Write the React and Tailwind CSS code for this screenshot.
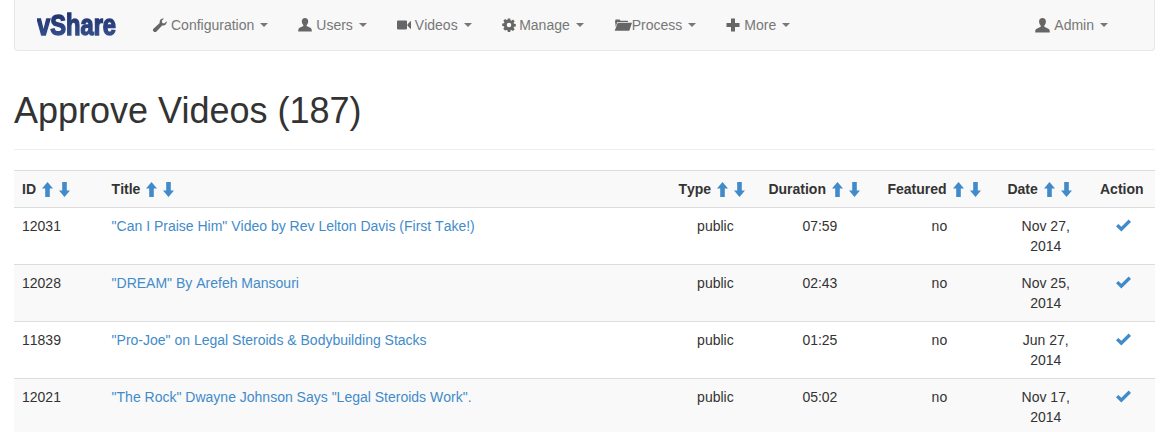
const Caret = () => <span className="ml-[6px] inline-block w-0 h-0 align-middle border-t-[4px] border-x-[4px] border-x-transparent border-t-[#777]" />

const Wrench = ({ className }) => (
  <svg viewBox="0 0 14 14" className={className} fill="currentColor">
    <path d="M13.6 3.2c.3 1.2 0 2.500-.9 3.400-1 .9-2.300 1.200-3.500.8L3 14c-.5.4-1.300.4-1.800-.1l-1-1c-.5-.5-.5-1.300 0-1.800l6.500-6.100C6.400 3.800 6.700 2.500 7.600 1.500 8.500.6 9.800.3 11 .6L8.800 2.800l.4 2.100 2.100.5z" />
  </svg>
)
const User = ({ className }) => (
  <svg viewBox="0 0 14 14" className={className} fill="currentColor">
    <path d="M7 0c2 0 3.200 1.400 3.200 3.300 0 1.300-.5 2.700-1.300 3.500-.4.500-.4 1.200.1 1.500 1.200.7 4 1.300 4.500 2.700.2.700.3 1.700.3 2.500H.2c0-.8.1-1.800.3-2.500.5-1.400 3.300-2 4.500-2.700.5-.3.500-1 .1-1.500C4.300 6 3.800 4.600 3.800 3.300 3.800 1.400 5 0 7 0z" />
  </svg>
)
const Video = ({ className }) => (
  <svg viewBox="0 0 14 14" className={className} fill="currentColor">
    <path d="M0 3.500C0 3 .4 2.600 1 2.600h8c.5 0 1 .4 1 .9v7c0 .5-.5.9-1 .9H1c-.6 0-1-.4-1-.9zM10.500 6.200 13.400 3.300H14v7.400h-.6l-2.900-2.900z" />
  </svg>
)
const Cog = ({ className }) => (
  <svg viewBox="0 0 14 14" className={className} fill="currentColor" fillRule="evenodd">
    <path d="M5.800.5h2.400l.3 1.800 1 .4L11 1.600l1.700 1.700-1.100 1.500.4 1 1.800.3v2.400l-1.800.3-.4 1 1.100 1.500-1.700 1.700-1.500-1.100-1 .4-.3 1.800H5.800l-.3-1.800-1-.4L3 12.400 1.300 10.700l1.100-1.500-.4-1-1.800-.3V5.500L2 5.200l.4-1L1.300 2.700 3 1l1.500 1.100 1-.4zM7 4.700a2.300 2.300 0 1 0 0 4.600 2.300 2.300 0 0 0 0-4.600z" />
  </svg>
)
const Folder = ({ className }) => (
  <svg viewBox="0 0 18 14" className={className} fill="currentColor">
    <path d="M1 3.500 1.600 1.500h4l.8 1.200h7.400l.4 1.200H3.300L1.800 9zM3.800 4.800H18l-2.700 8H.7z" />
  </svg>
)
const Plus = ({ className }) => (
  <svg viewBox="0 0 14 14" className={className} fill="currentColor">
    <path d="M5 .5h4v4.500h4.500v4H9v4.500H5V9H.5V5H5z" />
  </svg>
)
const ArrowUp = () => (
  <svg viewBox="0 0 11 15" className="w-[11px] h-[15px] text-[#428bca]" fill="currentColor">
    <path d="M5.500 0 11 6.500H7.800V15H3.200V6.500H0z" />
  </svg>
)
const ArrowDown = () => (
  <svg viewBox="0 0 11 15" className="w-[11px] h-[15px] text-[#428bca]" fill="currentColor">
    <path d="M5.500 15 11 8.500H7.800V0H3.200V8.500H0z" />
  </svg>
)
const Check = () => (
  <svg viewBox="0 0 14 12" className="inline-block w-[15px] h-[13px] mr-[1px] text-[#428bca] align-[-1px]" fill="currentColor">
    <path d="M0 6.700 2.200 4.500 5 7.200 11.800.5 14 2.700 5 11.500z" />
  </svg>
)

const menus = [
  { label: "Configuration", Icon: Wrench, icon: "w-[14px] h-[14px] mr-[4px]" },
  { label: "Users", Icon: User, icon: "w-[14px] h-[14px] mr-[4px]" },
  { label: "Videos", Icon: Video, icon: "w-[14px] h-[14px] mr-[4px]" },
  { label: "Manage", Icon: Cog, icon: "w-[14px] h-[14px] mr-[3.5px]" },
  { label: "Process", Icon: Folder, icon: "w-[18px] h-[14px]" },
  { label: "More", Icon: Plus, icon: "w-[14px] h-[14px] mr-[4px]" },
]

const videos = [
  { id: "12031", title: '"Can I Praise Him" Video by Rev Lelton Davis (First Take!)', duration: "07:59", date: "Nov 27, 2014" },
  { id: "12028", title: '"DREAM" By Arefeh Mansouri', duration: "02:43", date: "Nov 25, 2014" },
  { id: "11839", title: '"Pro-Joe" on Legal Steroids & Bodybuilding Stacks', duration: "01:25", date: "Jun 27, 2014" },
  { id: "12021", title: '"The Rock" Dwayne Johnson Says "Legal Steroids Work".', duration: "05:02", date: "Nov 17, 2014" },
]

const headers = [
  { label: "ID", sort: true, width: "w-[89.6px]" },
  { label: "Title", sort: true, width: "" },
  { label: "Type", sort: true, width: "w-[90px]" },
  { label: "Duration", sort: true, width: "w-[119px]" },
  { label: "Featured", sort: true, width: "w-[120px]" },
  { label: "Date", sort: true, width: "w-[92.6px]" },
  { label: "Action", sort: false, width: "w-[63px]" },
]

export default function App() {
  return (
    <div className="h-[432px] overflow-hidden bg-white text-[14px] leading-[20px] text-[#333] [font-kerning:none]" style={{ fontFamily: '"Liberation Sans", Arial, sans-serif' }}>
      <div className="px-[14px]">
        <nav className="flex items-center h-[51px] bg-[#f8f8f8] border border-t-0 border-[#e7e7e7] rounded-b-[4px]">
          <span className="ml-[22px] w-[101px] text-[30px] leading-[34px] font-bold origin-left scale-x-[0.79] bg-gradient-to-b from-[#1b2c68] to-[#3a5694] bg-clip-text text-transparent [-webkit-text-stroke:1.5px_transparent] whitespace-nowrap">vShare</span>
          {menus.map(({ label, Icon, icon }) => (
            <a key={label} className="flex items-center px-[15px] h-full text-[#777] whitespace-nowrap">
              <Icon className={icon + " text-[#666]"} />
              {label}
              <Caret />
            </a>
          ))}
          <a className="flex items-center ml-auto mr-[31px] px-[15px] h-full text-[#777] whitespace-nowrap">
            <User className="w-[15px] h-[15px] mr-[4px] text-[#666]" />
            Admin
            <Caret />
          </a>
        </nav>
        <div className="mt-[40px] pb-[18px] border-b border-[#eee]">
          <h1 className="text-[36px] leading-[40px] font-normal [font-kerning:normal]">Approve Videos (187)</h1>
        </div>
        <table className="mt-[20px] w-full table-fixed border-collapse">
          <thead>
            <tr className="bg-[#f9f9f9] border-y border-[#ddd]">
              {headers.map((h) => (
                <th key={h.label} className={h.width + " p-[8px] text-left font-bold whitespace-nowrap"}>
                  <span className="flex items-center">
                    {h.label}
                    {h.sort && (
                      <span className="ml-[6px] flex gap-[6px]">
                        <ArrowUp />
                        <ArrowDown />
                      </span>
                    )}
                  </span>
                </th>
              ))}
            </tr>
          </thead>
          <tbody>
            {videos.map((v, i) => (
              <tr key={v.id} className={(i % 2 ? "bg-[#f9f9f9]" : "bg-white") + " border-b border-[#ddd]"}>
                <td className="p-[8px] align-top">{v.id}</td>
                <td className="p-[8px] align-top"><a className="text-[#428bca]">{v.title}</a></td>
                <td className="p-[8px] align-top text-center">public</td>
                <td className="p-[8px] align-top text-center">{v.duration}</td>
                <td className="p-[8px] align-top text-center">no</td>
                <td className="p-[8px] align-top text-center">{v.date}</td>
                <td className="p-[8px] align-top text-center"><Check /></td>
              </tr>
            ))}
          </tbody>
        </table>
      </div>
    </div>
  )
}
